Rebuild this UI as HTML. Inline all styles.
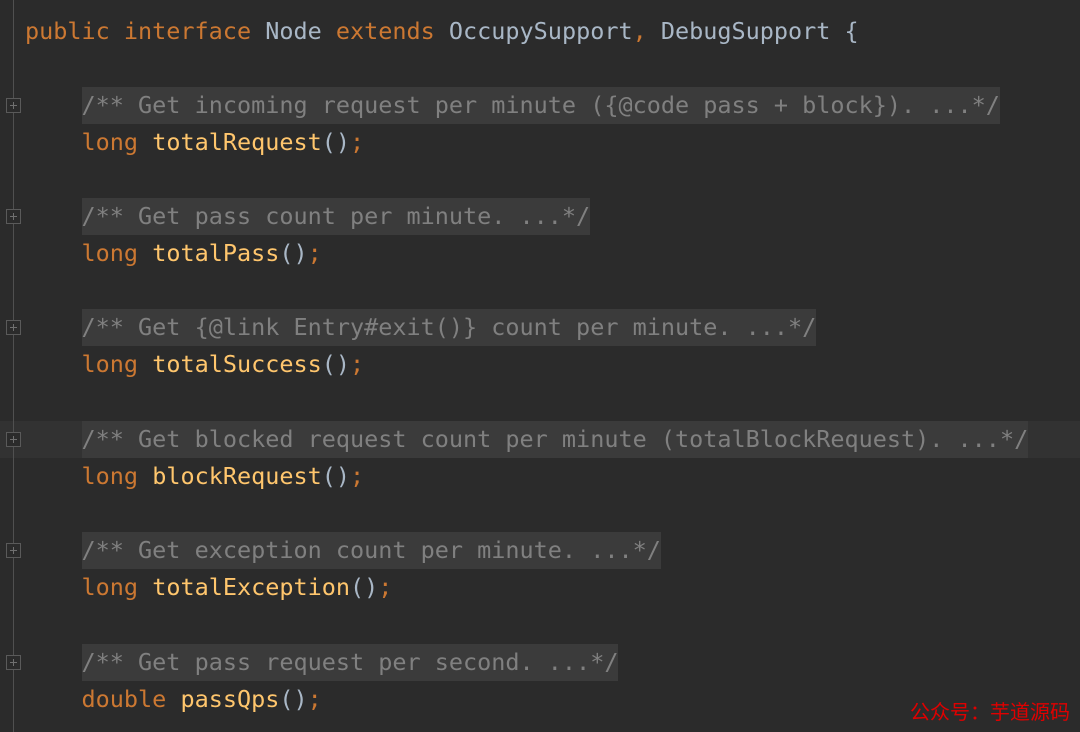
<!DOCTYPE html>
<html><head><meta charset="utf-8"><style>
html,body{margin:0;padding:0;width:1080px;height:732px;overflow:hidden;background:#2b2b2b}
.g{position:absolute;left:13px;top:0;width:1px;height:732px;background:#505050}
.cur{position:absolute;left:0;top:421px;width:1080px;height:37px;background:#323232}
.l{position:absolute;left:25px;height:37px;line-height:37px;font-family:"DejaVu Sans Mono","Liberation Mono",monospace;font-size:23.48px;white-space:pre;color:#a9b7c6}
.k{color:#cc7832}.f{color:#ffc66d}
.c{color:#808080;background:#3b3b3b;display:inline-block}
.fold{position:absolute;left:6px;width:15px;height:15px;border:1px solid #5a5a5a;background:#2b2b2b;box-sizing:border-box}
.fold:before{content:"";position:absolute;left:3px;top:6px;width:7px;height:1px;background:#707070}
.fold:after{content:"";position:absolute;left:6px;top:3px;width:1px;height:7px;background:#707070}
.wm{position:absolute;left:910px;top:697px;font-family:"Noto Sans CJK SC",sans-serif;font-size:20px;color:#e00000;line-height:28px}
</style></head><body>
<div class="cur"></div>
<div class="g"></div>
<div class="l" style="top:13px"><span class="k">public interface </span>Node <span class="k">extends </span>OccupySupport<span class="k">, </span>DebugSupport {</div>

<div class="fold" style="top:98px"></div>
<div class="l" style="top:87px">    <span class="c">/** Get incoming request per minute ({@code pass + block}). ...*/</span></div>
<div class="l" style="top:124px">    <span class="k">long </span><span class="f">totalRequest</span>()<span class="k">;</span></div>

<div class="fold" style="top:209px"></div>
<div class="l" style="top:198px">    <span class="c">/** Get pass count per minute. ...*/</span></div>
<div class="l" style="top:235px">    <span class="k">long </span><span class="f">totalPass</span>()<span class="k">;</span></div>

<div class="fold" style="top:320px"></div>
<div class="l" style="top:309px">    <span class="c">/** Get {@link Entry#exit()} count per minute. ...*/</span></div>
<div class="l" style="top:346px">    <span class="k">long </span><span class="f">totalSuccess</span>()<span class="k">;</span></div>

<div class="fold" style="top:432px"></div>
<div class="l" style="top:421px">    <span class="c">/** Get blocked request count per minute (totalBlockRequest). ...*/</span></div>
<div class="l" style="top:458px">    <span class="k">long </span><span class="f">blockRequest</span>()<span class="k">;</span></div>

<div class="fold" style="top:543px"></div>
<div class="l" style="top:532px">    <span class="c">/** Get exception count per minute. ...*/</span></div>
<div class="l" style="top:569px">    <span class="k">long </span><span class="f">totalException</span>()<span class="k">;</span></div>

<div class="fold" style="top:655px"></div>
<div class="l" style="top:644px">    <span class="c">/** Get pass request per second. ...*/</span></div>
<div class="l" style="top:681px">    <span class="k">double </span><span class="f">passQps</span>()<span class="k">;</span></div>

<div class="wm">公众号：芋道源码</div>
</body></html>
